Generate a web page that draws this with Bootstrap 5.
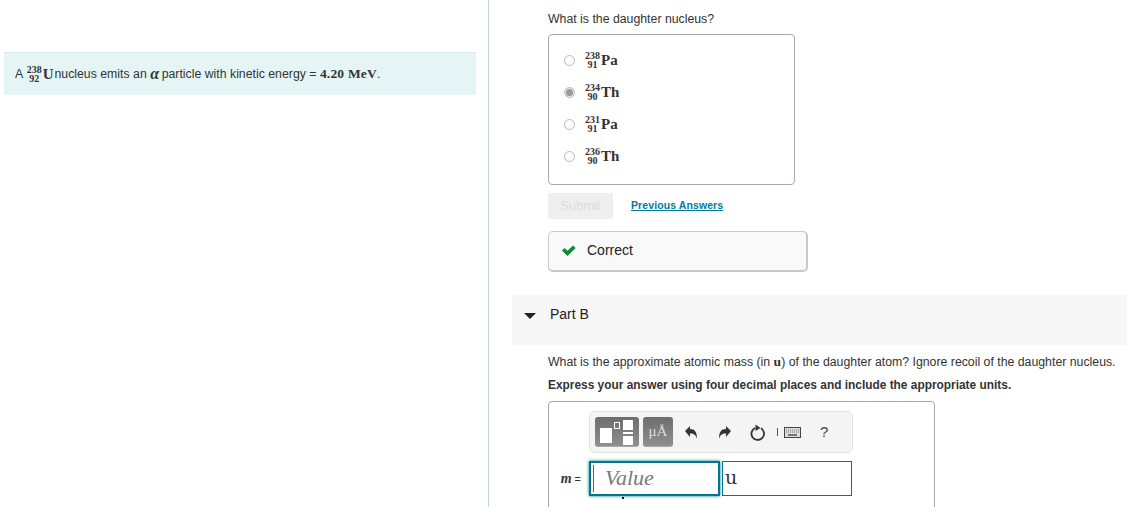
<!DOCTYPE html>
<html lang="en">
<head>
  <meta charset="UTF-8" />
  <title>Daughter Nucleus</title>
  <link href="https://cdn.jsdelivr.net/npm/bootstrap@5.3.0/dist/css/bootstrap.min.css" rel="stylesheet">
  <style>
    html, body { height: 507px; overflow: hidden; }
    body { font-family: "Liberation Sans", Arial, sans-serif; font-size: 12.3px; color: #333; background: #fff; }
    .page-wrap { height: 507px; overflow: hidden; }
    .left-pane { width: 489px; flex: none; border-right: 1px solid #c5d5e2; padding: 52px 12px 0 4px; }
    .intro-box { height: 43px; background: #e5f5f6; border-top: 1px solid #dfe5e6; padding-left: 11px; white-space: nowrap; }
    .right-pane { flex: 1; min-width: 0; padding-top: 12px; }
    .indent { margin-left: 59px; }
    .q-text { line-height: 14px; }
    .choice-box { width: 247px; height: 151px; margin-top: 8px; border: 1px solid #a8a8a8; border-radius: 4px; padding: 9px 0 0 15px; }
    .choice-row { height: 32px; gap: 10px; }
    .radio-dot { width: 11px; height: 11px; border: 1px solid #bbb; border-radius: 50%; background: #fff; flex: none; display: flex; align-items: center; justify-content: center; }
    .radio-dot.on { background: #e6e6e6; }
    .radio-dot.on::after { content: ""; width: 7px; height: 7px; border-radius: 50%; background: #9a9a9a; }
    .nuclide { display: inline-flex; align-items: center; font-family: "Liberation Serif", serif; font-weight: 700; color: #333; }
    .nums { display: inline-flex; flex-direction: column; align-items: center; font-size: 10px; line-height: 9px; margin-right: 1px; }
    .sym { font-size: 15px; }
    .math-b { font-family: "Liberation Serif", serif; font-weight: 700; font-size: 13.5px; letter-spacing: 0.2px; }
    .math-a { font-size: 16px; line-height: 12px; margin-right: -1px; }
    .after-u { margin-left: 1px; }
    .submit-btn { width: 65px; height: 26px; background: #efefef; color: #dcdcdc; font-size: 13px; border-radius: 2px; }
    .prev-link { color: #007c9c; font-size: 10.5px; font-weight: 700; margin-left: 18px; letter-spacing: 0.1px; }
    .correct-box { width: 260px; height: 41px; margin-top: 12px; background: #f9f9f9; border: 1px solid #c8c8c8; border-bottom-width: 2px; border-right-width: 2px; border-radius: 5px; padding: 0 0 2px 13px; gap: 11px; font-size: 14px; color: #222; }
    .part-bar { height: 50px; margin-top: 23px; margin-left: 23px; background: #f7f7f7; padding: 10px 0 0 12px; font-size: 14px; line-height: 18px; color: #222; }
    .part-arrow { width: 0; height: 0; border-left: 6px solid transparent; border-right: 6px solid transparent; border-top: 6px solid #222; margin-right: 14px; }
    .q-two { margin-top: 10px; line-height: 14px; white-space: nowrap; }
    .q-bold { margin-top: 9px; line-height: 14px; font-weight: 700; font-size: 11.9px; color: #333; }
    .answer-box { width: 387px; height: 120px; margin-top: 9px; border: 1px solid #a8a8a8; border-radius: 4px; padding: 9px 0 0 40px; }
    .tool-bar { width: 264px; height: 42px; background: #f4f4f4; border: 1px solid #e2e2e2; border-radius: 6px; padding-left: 5px; }
    .tpl-btn { height: 30px; background: linear-gradient(#6d6d6d, #8f8f8f); border-radius: 3px; border-bottom: 1px solid #aaa; color: #ddd; }
    .tpl-one { width: 44px; }
    .tpl-two { width: 30px; margin-left: 4px; font-family: "Liberation Serif", serif; font-size: 15px; }
    .help-q { font-size: 15px; color: #444; margin-left: 19px; }
    .input-row { margin-top: 8px; margin-left: -35px; }
    .m-label { font-size: 11px; width: 31px; flex: none; }
    .m-label i { font-family: "Liberation Serif", serif; font-weight: 700; font-size: 14px; }
    .value-field { width: 131px; height: 35px; border: 2px solid #00768f; box-shadow: 0 0 3px #00768f; font-family: "Liberation Serif", serif; font-style: italic; font-size: 22px; color: #7a7a7a; padding-left: 14px; position: relative; line-height: 30px; }
    .value-field::before { content: ""; position: absolute; left: 2px; top: 2px; bottom: 2px; border-left: 1px solid #3c66bb; }
    .value-field::after { content: ""; position: absolute; left: 31px; bottom: -5px; width: 2px; height: 2px; background: #111; }
    .unit-field { width: 130px; height: 35px; margin-left: 2px; border: 1px solid #00768f; font-family: "DejaVu Serif", serif; font-size: 19px; padding-left: 2px; line-height: 31px; color: #333; }
  </style>
</head>
<body>
  <div class="page-wrap d-flex">
    <div class="left-pane">
      <div class="intro-box d-flex align-items-center">
        <span>A&nbsp;</span>
        <span class="nuclide"><span class="nums"><span>238</span><span>92</span></span><span class="sym">U</span></span>
        <span class="after-u">nucleus emits an&nbsp;</span><span class="math-b math-a fst-italic">α</span><span>&nbsp;particle with kinetic energy =&nbsp;</span><span class="math-b">4.20 MeV</span><span>.</span>
      </div>
    </div>

    <div class="right-pane">
      <div class="indent q-text">What is the daughter nucleus?</div>
      <div class="indent choice-box">
        <div class="choice-row d-flex align-items-center"><span class="radio-dot"></span><span class="nuclide"><span class="nums"><span>238</span><span>91</span></span><span class="sym">Pa</span></span></div>
        <div class="choice-row d-flex align-items-center"><span class="radio-dot on"></span><span class="nuclide"><span class="nums"><span>234</span><span>90</span></span><span class="sym">Th</span></span></div>
        <div class="choice-row d-flex align-items-center"><span class="radio-dot"></span><span class="nuclide"><span class="nums"><span>231</span><span>91</span></span><span class="sym">Pa</span></span></div>
        <div class="choice-row d-flex align-items-center"><span class="radio-dot"></span><span class="nuclide"><span class="nums"><span>236</span><span>90</span></span><span class="sym">Th</span></span></div>
      </div>

      <div class="indent d-flex align-items-center mt-2">
        <div class="submit-btn d-flex align-items-center justify-content-center">Submit</div>
        <a href="#" class="prev-link">Previous Answers</a>
      </div>

      <div class="indent correct-box d-flex align-items-center">
        <svg width="14" height="11" viewBox="0 0 14 11"><path d="M0 5.500l2.500-2.500 3 2.800L11 .5l2.700 2.500-8.200 8z" fill="#0f8a3c"/></svg>
        <span>Correct</span>
      </div>

      <div class="part-bar d-flex align-items-start">
        <span class="part-arrow mt-2"></span><span>Part B</span>
      </div>

      <div class="indent q-two">What is the approximate atomic mass (in <span class="math-b">u</span>) of the daughter atom? Ignore recoil of the daughter nucleus.</div>
      <div class="indent q-bold">Express your answer using four decimal places and include the appropriate units.</div>

      <div class="indent answer-box">
        <div class="tool-bar d-flex align-items-center">
          <div class="tpl-btn tpl-one d-flex align-items-center justify-content-center">
            <svg width="40" height="26" viewBox="0 0 40 26"><rect x="3" y="9" width="12" height="15" fill="#fff"/><rect x="17.500" y="3.500" width="5" height="6" fill="none" stroke="#fff"/><rect x="26" y="1" width="10" height="10" fill="#fff"/><rect x="26" y="13" width="10" height="2" fill="#fff"/><rect x="26" y="17" width="10" height="9" fill="#fff"/></svg>
          </div>
          <div class="tpl-btn tpl-two d-flex align-items-center justify-content-center">μÅ</div>
          <svg style="margin-left:11px" width="14" height="15" viewBox="0 0 14 15"><path d="M1 6l5-5v3c5 0 7 3 7 10-1-4-3-5.500-7-5.500V12z" fill="#333"/></svg>
          <svg style="margin-left:20px" width="14" height="15" viewBox="0 0 14 15"><path d="M13 6L8 1v3c-5 0-7 3-7 10 1-4 3-5.500 7-5.500V12z" fill="#333"/></svg>
          <svg style="margin-left:18px" width="16" height="17" viewBox="0 0 16 17"><path d="M5 4a6.300 6.300 0 1 0 6 .3" fill="none" stroke="#333" stroke-width="1.800"/><path d="M5.500 0.500l5 3.500-5 3z" fill="#333"/></svg>
          <span style="margin-left:11px;border-left:1px solid #555;height:8px"></span>
          <svg style="margin-left:6px" width="17" height="11" viewBox="0 0 17 11"><rect x=".5" y=".5" width="16" height="10" fill="#ddd" stroke="#444"/><path d="M2 3h13M2 5h13" stroke="#777" stroke-dasharray="1 1"/><rect x="4" y="7" width="9" height="2" fill="#777"/></svg>
          <span class="help-q">?</span>
        </div>
        <div class="input-row d-flex align-items-center">
          <span class="m-label text-end pe-1"><i>m</i> =</span>
          <div class="value-field ms-1">Value</div>
          <div class="unit-field">u</div>
        </div>
      </div>
    </div>
  </div>
</body>
</html>
